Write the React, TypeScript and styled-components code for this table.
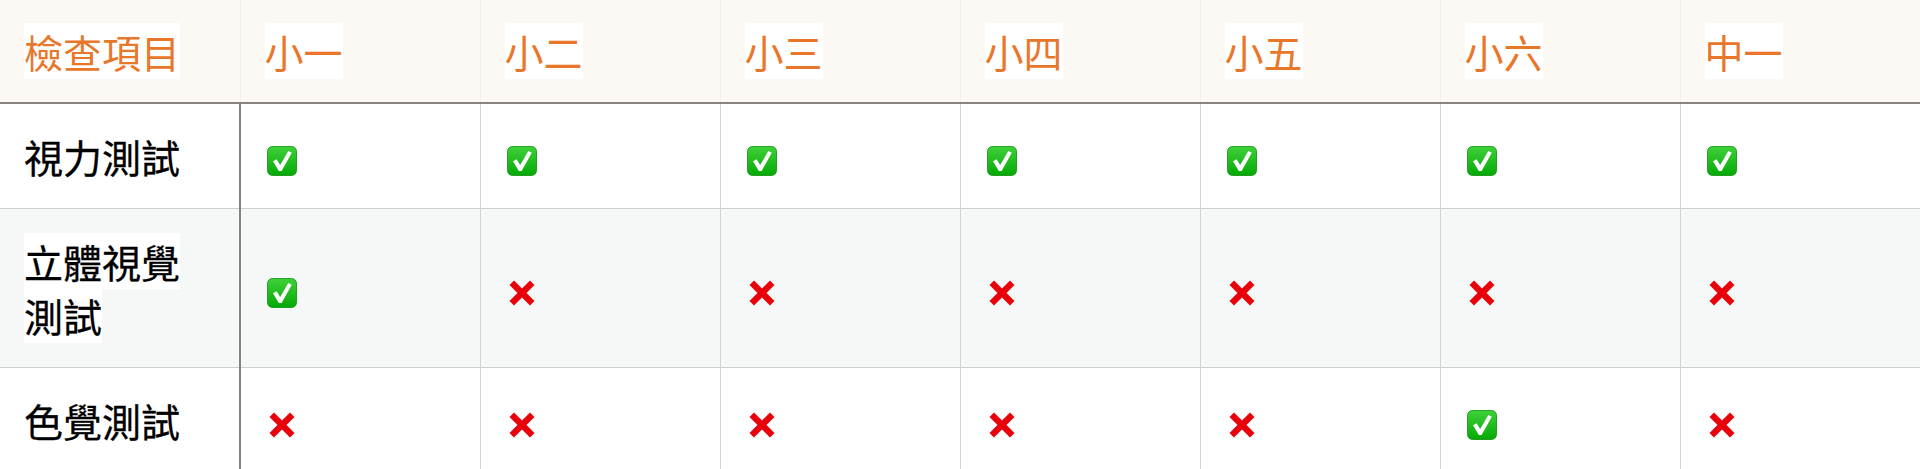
import styled, { createGlobalStyle } from "styled-components";

const GlobalStyle = createGlobalStyle`
  html, body {
    margin: 0;
    padding: 0;
    background: #ffffff;
  }
  body {
    font-family: "Noto Sans CJK TC", "Noto Sans", sans-serif;
  }
`;

const Table = styled.table`
  width: 1920px;
  table-layout: fixed;
  border-collapse: collapse;
  font-size: 39px;
  line-height: 54px;
`;

const HeadCell = styled.th`
  background: #fcf9f4;
  color: #e9772a;
  font-weight: 400;
  text-align: left;
  padding: 24px 24px;
  border-bottom: 2px solid #8a8481;
  border-left: 1px solid #f3eee7;
  &:first-child {
    border-left: none;
  }
`;

const Row = styled.tr<{ $shaded?: boolean }>`
  background: ${({ $shaded }) => ($shaded ? "#f6f7f7" : "#ffffff")};
  border-bottom: 1px solid #cfcfcf;
`;

const LabelCell = styled.td`
  color: #000000;
  font-weight: 400;
  -webkit-text-stroke: 0.3px #000000;
  padding: 25px 24px;
  border-right: 2px solid #828282;
  vertical-align: middle;
`;

const MarkCell = styled.td`
  padding: 25px 24px 25px 26px;
  border-right: 1px solid #d2d2d2;
  vertical-align: middle;
  &:last-child {
    border-right: none;
  }
`;

const Highlight = styled.span`
  background: #ffffff;
`;

const Icon = styled.svg`
  width: 30px;
  height: 30px;
  vertical-align: -3px;
`;

function CheckMark() {
  return (
    <Icon viewBox="0 0 30 30">
      <defs>
        <linearGradient id="ok" x1="0" y1="0" x2="0" y2="1">
          <stop offset="0" stopColor="#3fd13a" />
          <stop offset="1" stopColor="#05a805" />
        </linearGradient>
      </defs>
      <rect x="0.5" y="0.5" width="29" height="29" rx="5" fill="url(#ok)" stroke="#0a900a" strokeWidth="0.8" />
      <path
        d="M6 15.2 L9.6 13.2 L13.2 19 L21.3 5 L24.8 6.8 L14.6 25 L11.8 25 Z"
        fill="#ffffff"
      />
    </Icon>
  );
}

function CrossMark() {
  return (
    <Icon viewBox="0 0 30 30">
      <path
        d="M2.5 7 L7 2.5 L15 10.5 L23 2.5 L27.5 7 L19.5 15 L27.5 23 L23 27.5 L15 19.5 L7 27.5 L2.5 23 L10.5 15 Z"
        fill="#e8000b"
      />
    </Icon>
  );
}

const grades = ["小一", "小二", "小三", "小四", "小五", "小六", "中一"];

const rows: { name: string; marks: boolean[] }[] = [
  { name: "視力測試", marks: [true, true, true, true, true, true, true] },
  { name: "立體視覺測試", marks: [true, false, false, false, false, false, false] },
  { name: "色覺測試", marks: [false, false, false, false, false, true, false] },
];

export default function App() {
  return (
    <>
      <GlobalStyle />
      <Table>
        <thead>
          <tr>
            <HeadCell>
              <Highlight>檢查項目</Highlight>
            </HeadCell>
            {grades.map((g) => (
              <HeadCell key={g}>
                <Highlight>{g}</Highlight>
              </HeadCell>
            ))}
          </tr>
        </thead>
        <tbody>
          {rows.map((row, i) => (
            <Row key={row.name} $shaded={i % 2 === 1}>
              <LabelCell>
                <Highlight>{row.name}</Highlight>
              </LabelCell>
              {row.marks.map((ok, j) => (
                <MarkCell key={j}>{ok ? <CheckMark /> : <CrossMark />}</MarkCell>
              ))}
            </Row>
          ))}
        </tbody>
      </Table>
    </>
  );
}
